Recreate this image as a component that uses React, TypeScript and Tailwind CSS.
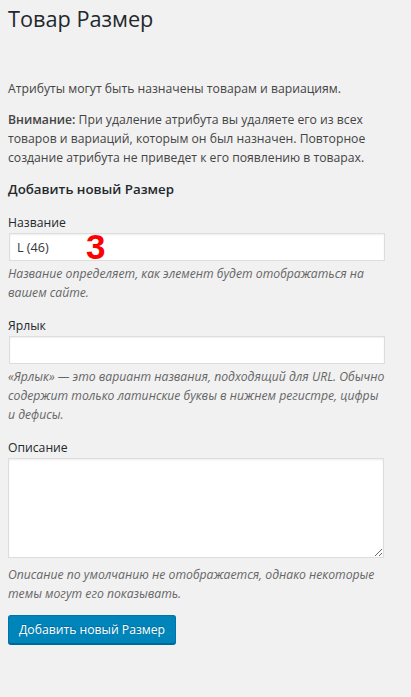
import { useState } from 'react';

const font = "font-['Open_Sans',sans-serif]";

function Field({
    label,
    hint,
    value,
    onChange,
    children,
}: {
    label: string;
    hint: React.ReactNode;
    value: string;
    onChange: (v: string) => void;
    children?: React.ReactNode;
}) {
    return (
        <div className="mb-[14px]">
            <label className="block mt-[2px] mb-[1px] leading-[19px] text-[#23282d]">{label}</label>
            <div className="relative">
                <input
                    value={value}
                    onChange={(e) => onChange(e.target.value)}
                    className="ml-[1px] block w-[376px] h-[28px] border border-[#ddd] bg-white px-[7px] text-[12.6px] text-[#32373c] shadow-[inset_0_1px_2px_rgba(0,0,0,0.07)] outline-none"
                />
                {children}
            </div>
            <p className="mt-[3px] italic text-[#666] leading-[19px]">{hint}</p>
        </div>
    );
}

export default function App() {
    const [name, setName] = useState('L (46)');
    const [slug, setSlug] = useState('');
    const [desc, setDesc] = useState('');

    return (
        <div className={`${font} min-h-[697px] bg-[#f1f1f1] px-[8px] text-[12.2px] text-[#444]`}>
            <h1 className="pt-[4px] text-[21.7px] leading-[29px] font-normal text-[#23282d]">
                Товар Размер
            </h1>

            <p className="mt-[46px] leading-[19px]">Атрибуты могут быть назначены товарам и вариациям.</p>
            <p className="mt-[12px] leading-[19px]">
                <strong className="font-semibold">Внимание:</strong> При удаление атрибута вы удаляете его из всех
                товаров и вариаций, которым он был назначен. Повторное создание атрибута не приведет к его
                появлению в товарах.
            </p>

            <h2 className="mt-[12px] mb-[14px] text-[13.3px] leading-[20px] font-semibold text-[#23282d]">
                Добавить новый Размер
            </h2>

            <Field
                label="Название"
                value={name}
                onChange={setName}
                hint="Название определяет, как элемент будет отображаться на вашем сайте."
            >
                {/* annotation over the input */}
                <span className="absolute left-[78px] top-[-6px] font-['Liberation_Sans',sans-serif] text-[35px] leading-[40px] font-bold text-[#ff0000] pointer-events-none">
                    3
                </span>
            </Field>

            <Field
                label="Ярлык"
                value={slug}
                onChange={setSlug}
                hint={
                    '«Ярлык» — это вариант названия, подходящий для URL. Обычно содержит только латинские буквы в нижнем регистре, цифры и\u00a0дефисы.'
                }
            />

            <div className="mb-[12px]">
                <label className="block mt-[2px] mb-[1px] leading-[19px] text-[#23282d]">Описание</label>
                <textarea
                    value={desc}
                    onChange={(e) => setDesc(e.target.value)}
                    className="block w-[376px] h-[100px] border border-[#ddd] bg-white px-[7px] py-[4px] text-[12.6px] text-[#32373c] shadow-[inset_0_1px_2px_rgba(0,0,0,0.07)] outline-none"
                />
                <p className="mt-[7px] italic text-[#666] leading-[19px]">
                    Описание по умолчанию не отображается, однако некоторые темы могут его показывать.
                </p>
            </div>

            <button className="h-[29px] rounded-[3px] border border-[#0073aa] border-b-[#006799] bg-[#0085ba] px-[10px] text-[12.2px] leading-[26px] text-white shadow-[0_1px_0_#006799] [text-shadow:0_-1px_1px_#006799]">
                Добавить новый Размер
            </button>
        </div>
    );
}
